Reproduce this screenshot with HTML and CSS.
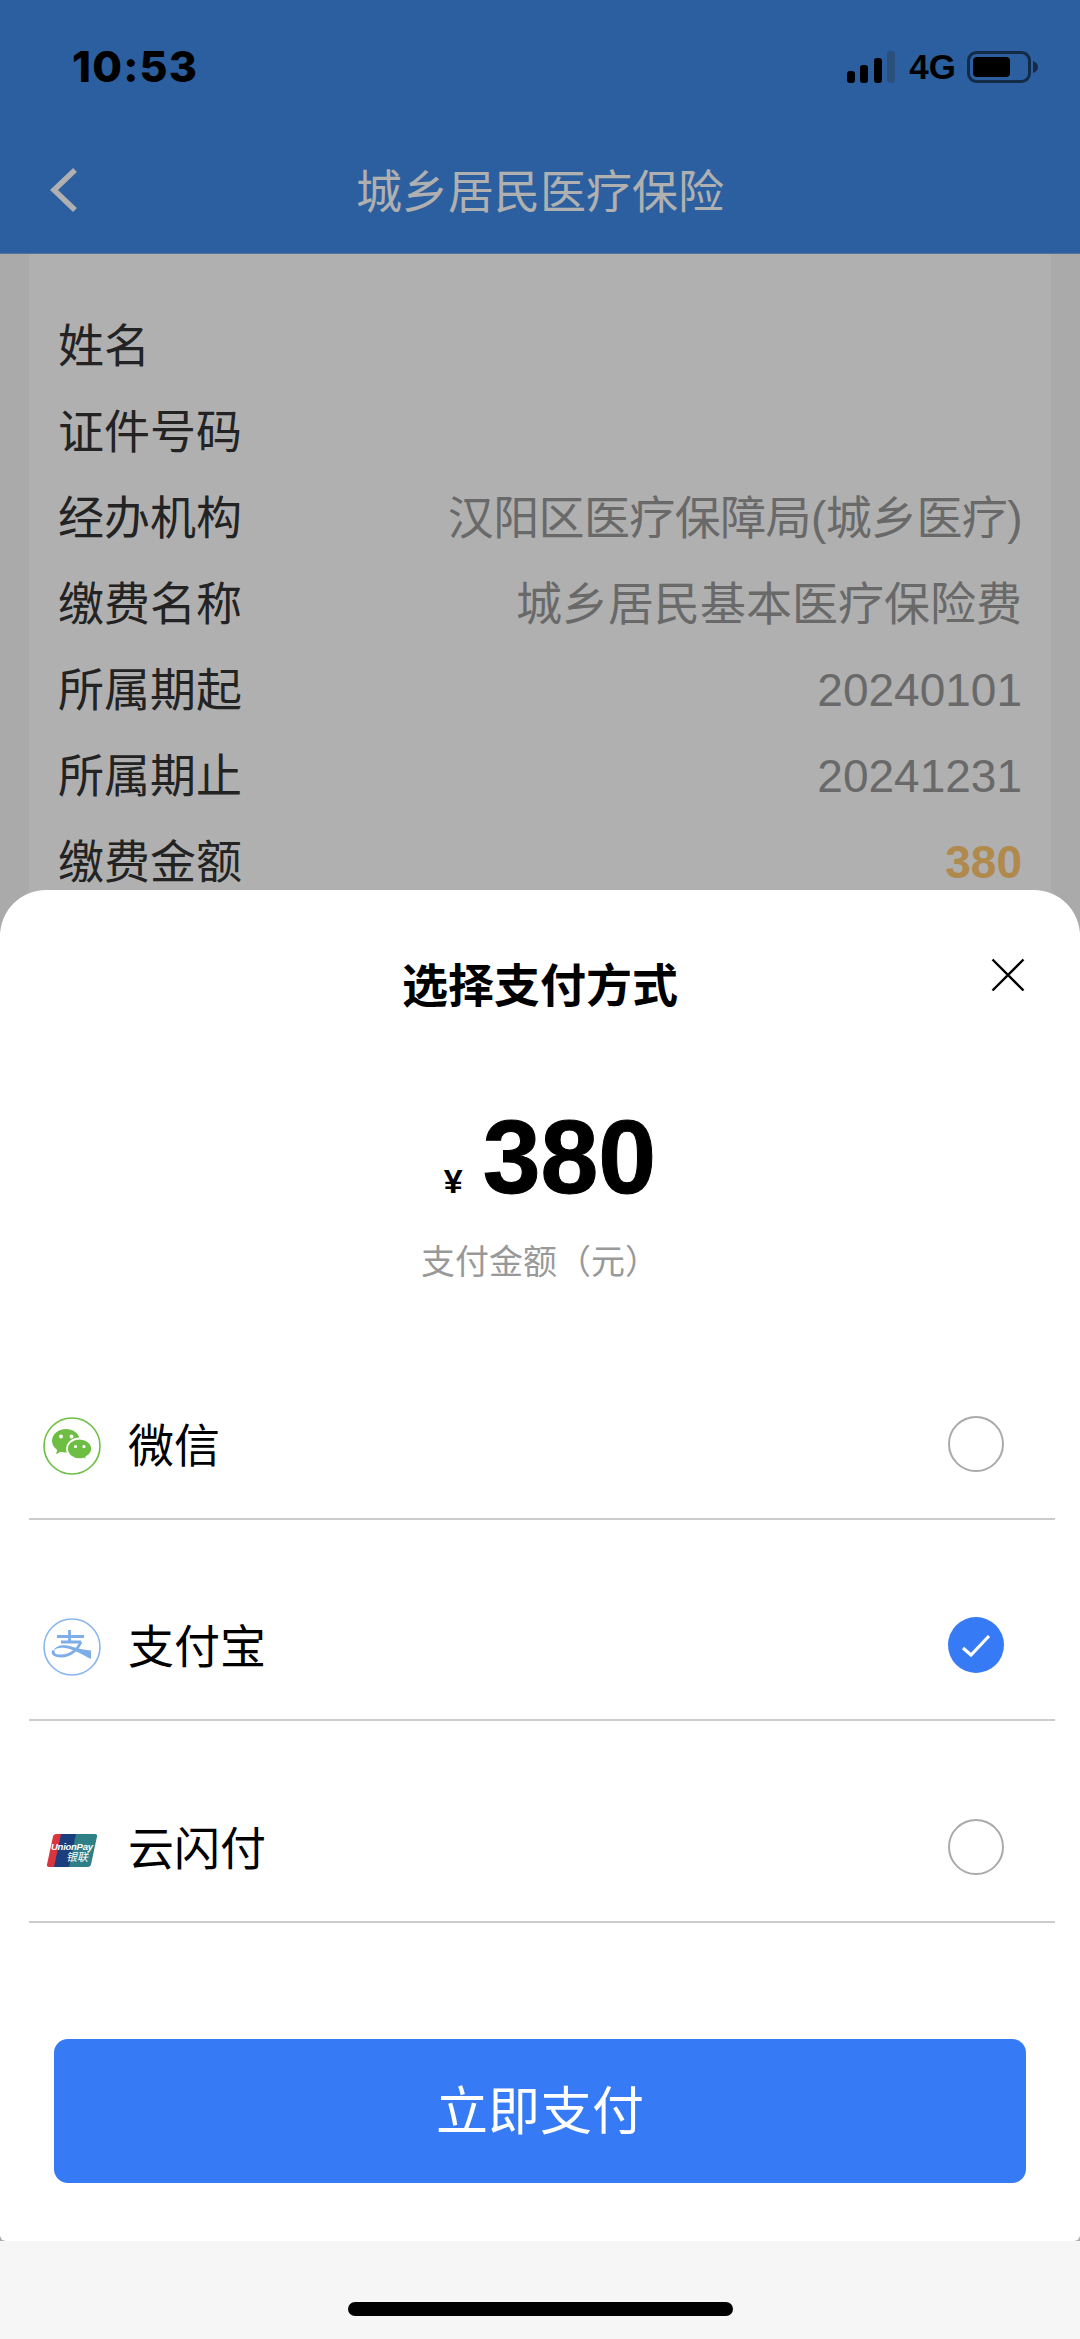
FILE: index.html
```html
<!DOCTYPE html>
<html lang="zh-CN">
<head>
    <meta charset="UTF-8">
    <meta name="viewport" content="width=device-width, initial-scale=1.0">
    <title>城乡居民医疗保险</title>
    <link rel="stylesheet" href="styles.css">
</head>
<body>
    <div class="page">
        <header class="top">
            <div class="status">
                <span class="time">10:53</span>
                <div class="status-right">
                    <svg class="signal" width="50" height="32" viewBox="0 0 50 32">
                        <rect x="0" y="20" width="8" height="12" rx="3" fill="#000"/>
                        <rect x="13" y="14" width="8" height="18" rx="3" fill="#000"/>
                        <rect x="27" y="7" width="8" height="25" rx="3" fill="#000"/>
                        <rect x="40" y="0" width="8" height="32" rx="3" fill="#3f74b4"/>
                    </svg>
                    <span class="net">4G</span>
                    <svg class="battery" width="72" height="32" viewBox="0 0 72 32">
                        <rect x="1.500" y="1.500" width="61" height="29" rx="8" fill="none" stroke="#1c3f68" stroke-width="3"/>
                        <rect x="6" y="6" width="37" height="20" rx="4" fill="#000"/>
                        <path d="M66 10c3 1 5 3 5 6s-2 5-5 6z" fill="#1c3f68"/>
                    </svg>
                </div>
            </div>
            <div class="nav">
                <svg class="back" width="30" height="46" viewBox="0 0 30 46">
                    <path d="M26 3L5 23l21 20" fill="none" stroke="#fff" stroke-width="5.500"/>
                </svg>
                <h1>城乡居民医疗保险</h1>
            </div>
        </header>

        <main class="info">
            <div class="info-row"><span>姓名</span></div>
            <div class="info-row"><span>证件号码</span></div>
            <div class="info-row"><span>经办机构</span><span class="val val-org">汉阳区医疗保障局(城乡医疗)</span></div>
            <div class="info-row"><span>缴费名称</span><span class="val">城乡居民基本医疗保险费</span></div>
            <div class="info-row"><span>所属期起</span><span class="val">20240101</span></div>
            <div class="info-row"><span>所属期止</span><span class="val">20241231</span></div>
            <div class="info-row"><span>缴费金额</span><span class="val money">380</span></div>
        </main>

        <footer class="home"><div class="home-bar"></div></footer>
    </div>

    <div class="mask">
        <section class="sheet">
            <h2>选择支付方式</h2>
            <svg class="close" width="34" height="34" viewBox="0 0 34 34">
                <path d="M1.500 1.500l31 31M32.500 1.500l-31 31" fill="none" stroke="#000" stroke-width="2.400"/>
            </svg>

            <div class="amount"><span class="yen">¥</span><span class="num">380</span></div>
            <div class="amount-label">支付金额（元）</div>

            <div class="pay-list">
                <div class="pay-row">
                    <svg class="pay-icon" width="58" height="58" viewBox="0 0 58 58">
                        <circle cx="29" cy="29" r="28" fill="#fff" stroke="#6fbe44" stroke-width="1.600"/>
                        <path d="M23 12c-7.800 0-14 5.200-14 11.800 0 3.700 2 7 5.200 9.200l-1.200 4.200 4.800-2.500c1.700.5 3.400.8 5.200.8 7.800 0 14-5.300 14-11.700S30.800 12 23 12z" fill="#6fbe44"/>
                        <path d="M36.500 21.500c-6.900 0-12.500 4.600-12.500 10.300s5.600 10.300 12.500 10.300c1.400 0 2.800-.2 4.100-.6l3.700 2.200-1-3.600c3.500-1.900 5.700-4.900 5.700-8.300 0-5.700-5.600-10.300-12.500-10.300z" fill="#6fbe44" stroke="#fff" stroke-width="1.800"/>
                        <circle cx="18" cy="19.500" r="1.900" fill="#fff"/>
                        <circle cx="28.500" cy="19.500" r="1.900" fill="#fff"/>
                        <circle cx="32.500" cy="29.500" r="1.600" fill="#fff"/>
                        <circle cx="41" cy="29.500" r="1.600" fill="#fff"/>
                    </svg>
                    <span class="pay-name">微信</span>
                    <span class="radio"></span>
                </div>
                <div class="pay-row">
                    <svg class="pay-icon" width="58" height="58" viewBox="0 0 58 58">
                        <circle cx="29" cy="29" r="28" fill="#fff" stroke="#8ab6ec" stroke-width="1.600"/>
                        <path d="M14 18.500h27M26.500 12v11M18 24h20" fill="none" stroke="#7fade8" stroke-width="2.800"/>
                        <path d="M38 24c-3 7-10 14-20 14-6 0-9-2-7.500-5.500" fill="none" stroke="#7fade8" stroke-width="2.800"/>
                        <path d="M10.500 33c2-6 11-7 19.500-4 6 2 12 3 18 3.500V41c-10-5-18-10-26-11-6-.7-9 .5-11.500 3z" fill="#7fade8"/>
                    </svg>
                    <span class="pay-name">支付宝</span>
                    <span class="radio checked">
                        <svg width="56" height="56" viewBox="0 0 56 56">
                            <path d="M15 31l8 7 18-19" fill="none" stroke="#fff" stroke-width="3.200"/>
                        </svg>
                    </span>
                </div>
                <div class="pay-row">
                    <svg class="pay-icon" width="58" height="58" viewBox="0 0 58 58">
                        <path d="M10 16.500c.4-1.500 1.600-2.500 3-2.500h14l-7 33H6c-1.500 0-2.400-1-2-2.500z" fill="#d9353f"/>
                        <path d="M18 14h18l-7 33H11z" fill="#1b3f7e"/>
                        <path d="M33 14h19c1.500 0 2.400 1 2 2.500l-6 28c-.4 1.500-1.600 2.500-3 2.500H26z" fill="#2e7f86"/>
                        <text x="8" y="30" class="up-en" textLength="42">UnionPay</text>
                        <text x="23" y="41" class="up-cn">银联</text>
                    </svg>
                    <span class="pay-name">云闪付</span>
                    <span class="radio"></span>
                </div>
            </div>

            <button class="pay-btn">立即支付</button>
        </section>
    </div>
</body>
</html>
```

FILE: styles.css
```css
* {
    box-sizing: border-box;
}
html, body {
    margin: 0;
    padding: 0;
    height: 100%;
}
body {
    position: relative;
    width: 1080px;
    height: 2339px;
    overflow: hidden;
    background-color: #f6f6f6;
    font-family: "Liberation Sans", "Noto Sans CJK SC", sans-serif;
    color: #333;
}
h1, h2 {
    margin: 0;
    font-weight: 400;
}

.page {
    display: flex;
    flex-direction: column;
    height: 100%;
}
.top {
    height: 254px;
    background-color: #3f8ae6;
    border-bottom: 1px solid #7aa9e6;
    flex-shrink: 0;
}
.status {
    height: 130px;
    padding: 45px 41px 0 72px;
    display: flex;
    justify-content: space-between;
    align-items: flex-start;
    color: #000;
}
.time {
    font-family: Inter, "Liberation Sans", sans-serif;
    font-size: 43px;
    line-height: 42px;
    font-weight: 800;
    letter-spacing: 1.200px;
}
.status-right {
    display: flex;
    align-items: center;
    padding-top: 6px;
}
.net {
    margin: 0 11px 0 12px;
    font-size: 35px;
    line-height: 32px;
    font-weight: 700;
}
.nav {
    position: relative;
    height: 123px;
    display: flex;
    align-items: center;
    justify-content: center;
}
.back {
    position: absolute;
    left: 49px;
    top: 37px;
}
.nav h1 {
    color: #fff;
    font-size: 46px;
    line-height: 122px;
}

.info {
    flex: 1;
    margin: 0 29px;
    padding: 49px 29px 0;
    background-color: #fff;
}
.info-row {
    display: flex;
    justify-content: space-between;
    height: 86px;
    font-size: 46px;
    line-height: 86px;
}
.val {
    color: #999;
}
.val-org {
    letter-spacing: -0.600px;
}
.money {
    color: #ffc76e;
    font-weight: 700;
}
.home {
    height: 98px;
    padding-top: 61px;
    flex-shrink: 0;
    background-color: #f6f6f6;
}
.home-bar {
    width: 385px;
    height: 14px;
    margin: 0 auto;
    border-radius: 7px;
    background-color: #000;
}

/* popup over the page */
.mask {
    position: absolute;
    left: 0;
    right: 0;
    top: 0;
    bottom: 98px;
    display: flex;
    flex-direction: column;
    justify-content: flex-end;
    background-color: rgba(0, 0, 0, 0.31);
}
.sheet {
    position: relative;
    height: 1351px;
    padding-top: 70px;
    background-color: #fff;
    border-radius: 46px 46px 6px 6px;
    color: #000;
}
.sheet h2 {
    text-align: center;
    font-size: 46px;
    line-height: 52px;
    font-weight: 700;
}
.close {
    position: absolute;
    top: 68px;
    right: 55px;
}
.amount {
    display: flex;
    justify-content: center;
    align-items: baseline;
    margin-top: 90px;
    padding-left: 26px;
    height: 110px;
    font-weight: 700;
    line-height: 110px;
}
.yen {
    font-size: 34px;
    margin-right: 20px;
    margin-left: -6px;
}
.num {
    font-size: 104px;
    -webkit-text-stroke: 1px #000;
}
.amount-label {
    margin-top: 27px;
    text-align: center;
    color: #999;
    font-size: 34px;
    line-height: 46px;
}
.pay-list {
    margin: 33px 25px 0 29px;
}
.pay-row {
    display: flex;
    align-items: center;
    height: 201.500px;
    padding: 99px 51px 43px 14px;
    border-bottom: 2px solid #ccc;
}
.pay-icon {
    flex-shrink: 0;
}
.up-en {
    font-size: 9.500px;
    font-weight: 700;
    font-style: italic;
    fill: #fff;
}
.up-cn {
    font-family: "Noto Sans CJK SC", sans-serif;
    font-size: 11px;
    font-style: italic;
    fill: #fff;
}
.pay-name {
    flex: 1;
    margin-left: 27px;
    font-size: 46px;
    line-height: 58px;
}
.radio {
    width: 56px;
    height: 56px;
    margin-top: -4px;
    border: 2px solid #aaa;
    border-radius: 50%;
    flex-shrink: 0;
}
.radio.checked {
    border: 0;
    background-color: #377af6;
}
.radio svg {
    display: block;
}
.pay-btn {
    display: block;
    width: 972px;
    height: 144px;
    margin: 116px 0 0 54px;
    padding: 3px 0 0;
    border: 0;
    border-radius: 14px;
    background-color: #377af6;
    color: #fff;
    font-family: inherit;
    font-size: 52px;
    line-height: 141px;
}
```
